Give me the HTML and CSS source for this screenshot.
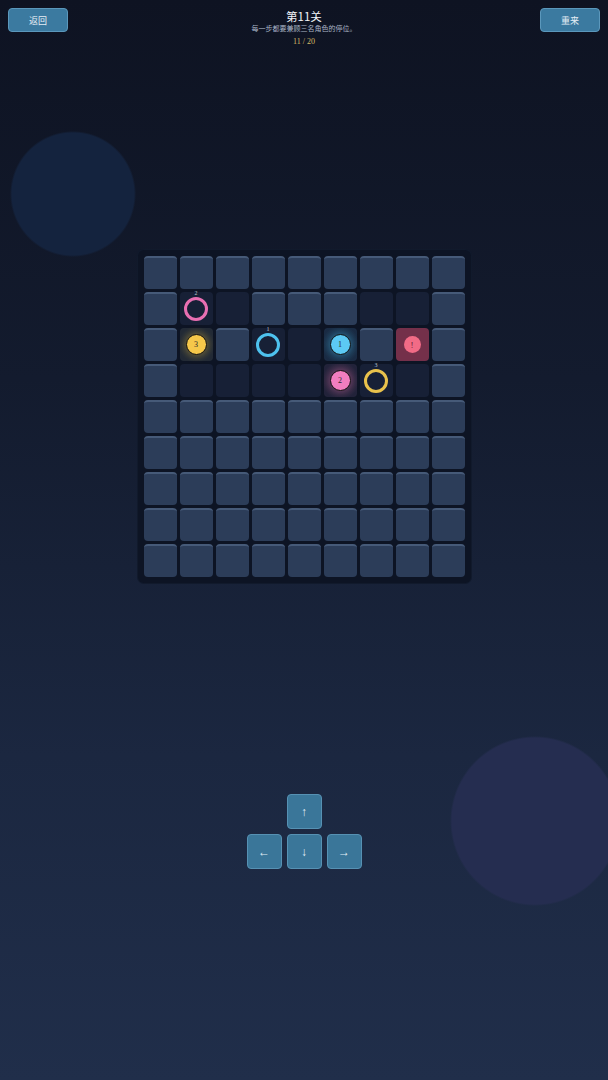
FILE: index.html
```html
<!DOCTYPE html>
<html lang="zh">
<head>
  <meta charset="UTF-8">
  <title>第11关</title>
  <link rel="stylesheet" href="styles.css">
</head>
<body>

  <div class="topbar">
    <button class="top-btn">返回</button>
    <div class="title-box">
      <h1>第11关</h1>
      <p class="hint">每一步都要兼顾三名角色的停位。</p>
      <p class="count">11 / 20</p>
    </div>
    <button class="top-btn">重来</button>
  </div>

  <div class="board">
    <!-- row 0 -->
    <div class="cell"></div><div class="cell"></div><div class="cell"></div>
    <div class="cell"></div><div class="cell"></div><div class="cell"></div>
    <div class="cell"></div><div class="cell"></div><div class="cell"></div>
    <!-- row 1 -->
    <div class="cell"></div>
    <div class="cell floor"><span class="ring pink"><i>2</i></span></div>
    <div class="cell floor"></div>
    <div class="cell"></div><div class="cell"></div><div class="cell"></div>
    <div class="cell floor"></div>
    <div class="cell floor"></div>
    <div class="cell"></div>
    <!-- row 2 -->
    <div class="cell"></div>
    <div class="cell floor glow-yellow"><span class="coin yellow">3</span></div>
    <div class="cell"></div>
    <div class="cell floor"><span class="ring blue"><i>1</i></span></div>
    <div class="cell floor"></div>
    <div class="cell floor glow-blue"><span class="coin blue">1</span></div>
    <div class="cell"></div>
    <div class="cell danger"><span class="alert">!</span></div>
    <div class="cell"></div>
    <!-- row 3 -->
    <div class="cell"></div>
    <div class="cell floor"></div>
    <div class="cell floor"></div>
    <div class="cell floor"></div>
    <div class="cell floor"></div>
    <div class="cell floor glow-pink"><span class="coin pink">2</span></div>
    <div class="cell floor"><span class="ring yellow"><i>3</i></span></div>
    <div class="cell floor"></div>
    <div class="cell"></div>
    <!-- rows 4-8 -->
    <div class="cell"></div><div class="cell"></div><div class="cell"></div>
    <div class="cell"></div><div class="cell"></div><div class="cell"></div>
    <div class="cell"></div><div class="cell"></div><div class="cell"></div>
    <div class="cell"></div><div class="cell"></div><div class="cell"></div>
    <div class="cell"></div><div class="cell"></div><div class="cell"></div>
    <div class="cell"></div><div class="cell"></div><div class="cell"></div>
    <div class="cell"></div><div class="cell"></div><div class="cell"></div>
    <div class="cell"></div><div class="cell"></div><div class="cell"></div>
    <div class="cell"></div><div class="cell"></div><div class="cell"></div>
    <div class="cell"></div><div class="cell"></div><div class="cell"></div>
    <div class="cell"></div><div class="cell"></div><div class="cell"></div>
    <div class="cell"></div><div class="cell"></div><div class="cell"></div>
    <div class="cell"></div><div class="cell"></div><div class="cell"></div>
    <div class="cell"></div><div class="cell"></div><div class="cell"></div>
    <div class="cell"></div><div class="cell"></div><div class="cell"></div>
  </div>

  <div class="pad">
    <button class="key up">↑</button>
    <button class="key left">←</button>
    <button class="key down">↓</button>
    <button class="key right">→</button>
  </div>

</body>
</html>
```

FILE: styles.css
```css
html {
  height: 100%;
}

body {
  margin: 0;
  min-height: 1080px;
  font-family: "Noto Sans CJK SC", "Noto Sans", sans-serif;
  background:
    radial-gradient(circle at 73px 194px, #14233e 61px, rgba(20,35,62,0) 63px),
    radial-gradient(circle at 535px 821px, #252d50 83px, rgba(37,45,80,0) 85px),
    linear-gradient(to bottom, #0e1322 0%, #131b2e 35%, #1b2740 70%, #202e4a 100%);
  background-repeat: no-repeat;
}

.topbar {
  display: flex;
  justify-content: space-between;
  align-items: flex-start;
  padding: 8px 8px 0;
}

.top-btn {
  width: 60px;
  height: 24px;
  background-color: #3b7aa0;
  border: 1px solid #5b98bc;
  border-radius: 4px;
  color: #e6eef5;
  font-family: "Noto Sans CJK SC", sans-serif;
  font-size: 9px;
  padding: 0;
  cursor: pointer;
}

.title-box {
  text-align: center;
}

h1 {
  margin: 0;
  font-size: 11.5px;
  font-weight: normal;
  color: #f2f4f8;
  line-height: 16px;
}

.hint {
  margin: 0;
  font-size: 7px;
  color: #a9b4c6;
  line-height: 8px;
}

.count {
  margin: 5px 0 0;
  font-family: "Liberation Serif", serif;
  font-size: 8px;
  color: #d6bd68;
}

.board {
  width: 321px;
  margin: 204px auto 0;
  padding: 6px;
  display: grid;
  grid-template-columns: repeat(9, 33px);
  grid-auto-rows: 33px;
  gap: 3px;
  background-color: #0d1424;
  border-radius: 6px;
  box-shadow: 0 0 0 1px #111a2c;
}

.cell {
  position: relative;
  display: flex;
  align-items: center;
  justify-content: center;
  background-color: #2c3d59;
  border-top: 2px solid #465a78;
  border-radius: 4px;
  box-sizing: border-box;
}

.floor {
  background-color: #172036;
  border-top: none;
}

.glow-yellow {
  background: radial-gradient(circle, #5a5634 0%, #3a3c35 35%, #222a36 75%);
}

.glow-blue {
  background: radial-gradient(circle, #1f5a7a 0%, #1d3f5c 40%, #1a2b44 80%);
}

.glow-pink {
  background: radial-gradient(circle, #5a3554 0%, #3e2d48 40%, #22233a 80%);
}

.danger {
  background-color: #74304a;
  border-top: none;
}

.coin {
  width: 19px;
  height: 19px;
  border-radius: 50%;
  border: 1px solid #111;
  display: flex;
  align-items: center;
  justify-content: center;
  font-family: "Liberation Serif", serif;
  font-size: 8px;
  color: #2a2a2a;
}

.coin.yellow {
  background-color: #f6c84a;
  box-shadow: 0 0 8px rgba(246,200,74,0.35);
}

.coin.blue {
  background-color: #5ccaf4;
  box-shadow: 0 0 8px rgba(92,202,244,0.35);
}

.coin.pink {
  background-color: #f27dbf;
  box-shadow: 0 0 8px rgba(242,125,191,0.35);
}

.ring {
  position: relative;
  width: 18px;
  height: 18px;
  border-radius: 50%;
  border: 3px solid;
}

.ring.pink { border-color: #e86fb2; }
.ring.blue { border-color: #4ec2ee; }
.ring.yellow { border-color: #e9c24c; }

.ring i {
  position: absolute;
  top: -11px;
  left: 50%;
  transform: translateX(-50%);
  font-style: normal;
  font-family: "Liberation Serif", serif;
  font-size: 6px;
  line-height: 8px;
  color: #b9c2d0;
}

.alert {
  width: 17px;
  height: 17px;
  border-radius: 50%;
  background-color: #f26b86;
  display: flex;
  align-items: center;
  justify-content: center;
  font-family: "Liberation Serif", serif;
  font-size: 9px;
  color: #6a2036;
}

.pad {
  width: 115px;
  margin: 211px auto 0;
  display: grid;
  grid-template-columns: repeat(3, 35px);
  grid-template-rows: repeat(2, 35px);
  gap: 5px;
}

.key {
  background-color: #3a7699;
  border: 1px solid #5691b3;
  border-radius: 4px;
  color: #e2eef6;
  font-size: 12px;
  padding: 0;
  cursor: pointer;
}

.up { grid-column: 2; grid-row: 1; }
.left { grid-column: 1; grid-row: 2; }
.down { grid-column: 2; grid-row: 2; }
.right { grid-column: 3; grid-row: 2; }
```
